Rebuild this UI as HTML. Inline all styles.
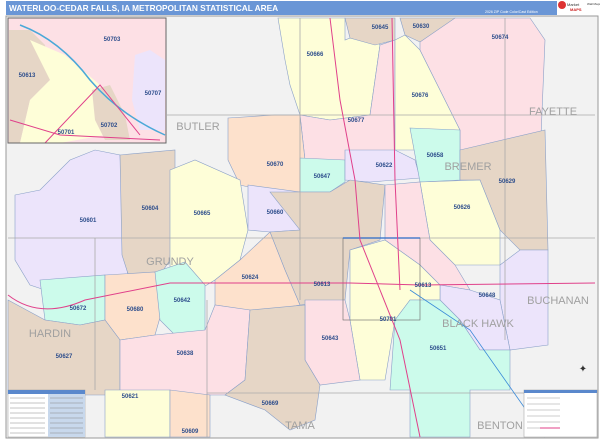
<!DOCTYPE html>
<html><head><meta charset="utf-8"><style>
body{margin:0;width:600px;height:439px;overflow:hidden;background:#fff;font-family:"Liberation Sans",sans-serif}
svg{display:block}
.z{font:bold 6px "Liberation Sans",sans-serif;fill:#2e4e8c}
.c{font:11px "Liberation Sans",sans-serif;fill:#a0a0a0}
</style></head><body>
<svg width="600" height="439" viewBox="0 0 600 439">
<rect x="0" y="0" width="600" height="439" fill="#fff"/>
<rect x="6" y="1" width="551" height="14" fill="#6a96d6"/>
<text x="9" y="11" font-family="Liberation Sans" font-weight="bold" font-size="8.3" fill="#fff">WATERLOO-CEDAR FALLS, IA METROPOLITAN STATISTICAL AREA</text>
<text x="485" y="13" font-family="Liberation Sans" font-size="3.5" fill="#fff">2026 ZIP Code Color/Cast Edition</text>
<rect x="557" y="0" width="43" height="15" fill="#fff"/>
<circle cx="562" cy="5" r="4" fill="#d33"/>
<text x="567" y="6" font-size="4" fill="#333">Market</text>
<text x="570" y="11" font-size="4" font-weight="bold" fill="#c22">MAPS</text>
<text x="587" y="5" font-size="3" fill="#333">Wall Maps</text>
<rect x="6" y="16" width="592" height="422" fill="#f2f2f2" stroke="#999" stroke-width="1"/>
<g stroke="#8aa0c8" stroke-width="0.6">
<polygon points="278,18 345,18 345,40 370,30 380,45 370,115 330,120 300,115 290,85 285,60" fill="#fefed8"/>
<polygon points="345,18 395,18 395,40 375,45 350,38" fill="#e6d6c6"/>
<polygon points="400,18 455,18 450,40 420,42 405,35" fill="#e6d6c6"/>
<polygon points="300,115 330,120 370,115 380,45 395,40 395,150 380,175 330,175 305,160" fill="#fde0e5"/>
<polygon points="395,40 405,35 420,50 440,90 460,130 460,150 395,150" fill="#fefed8"/>
<polygon points="420,42 455,18 530,18 545,40 540,160 460,160 460,130 440,90 420,50" fill="#fde0e5"/>
<polygon points="228,118 275,115 300,115 305,160 300,192 270,192 240,185 228,160" fill="#fde1cc"/>
<polygon points="300,158 345,160 345,182 330,192 300,192" fill="#ccfbeb"/>
<polygon points="345,150 395,150 415,160 420,178 370,182 345,180" fill="#ece4fb"/>
<polygon points="410,128 460,130 460,180 420,182" fill="#ccfbeb"/>
<polygon points="460,150 545,130 548,250 520,250 500,230 480,180 460,180" fill="#e6d6c6"/>
<polygon points="420,182 480,180 500,230 500,265 455,265 430,240" fill="#fefed8"/>
<polygon points="15,195 40,190 70,160 95,150 120,155 125,255 130,290 60,295 30,285 15,260" fill="#ece4fb"/>
<polygon points="120,155 175,150 175,170 170,260 160,275 130,280 122,255" fill="#e6d6c6"/>
<polygon points="170,170 195,160 240,180 248,230 240,260 215,280 190,295 170,275" fill="#fefed8"/>
<polygon points="248,185 300,192 300,230 270,232 248,230" fill="#ece4fb"/>
<polygon points="270,192 330,192 350,180 385,185 380,240 350,250 345,300 300,305 285,270 270,232 300,230" fill="#e6d6c6"/>
<polygon points="385,185 420,182 430,240 455,265 470,290 440,285 420,265 385,240" fill="#fde0e5"/>
<polygon points="240,260 270,232 285,270 300,305 260,312 215,305 215,280" fill="#fde1cc"/>
<polygon points="500,265 520,250 548,250 548,345 510,350 500,300" fill="#ece4fb"/>
<polygon points="440,285 470,290 500,300 510,350 480,350 460,320 440,300" fill="#ece4fb"/>
<polygon points="350,250 385,240 420,265 440,285 440,300 410,300 395,320 385,380 360,380 350,320" fill="#fefed8"/>
<polygon points="395,320 410,300 440,300 460,320 480,350 510,350 510,390 470,390 470,437 410,437 410,390 390,390" fill="#ccfbeb"/>
<polygon points="305,300 345,300 350,320 360,380 320,385 305,360" fill="#fde0e5"/>
<polygon points="40,280 105,275 105,320 80,325 45,320" fill="#ccfbeb"/>
<polygon points="105,275 155,272 165,300 155,335 120,340 105,320" fill="#fde1cc"/>
<polygon points="155,272 185,262 205,285 205,330 175,335 160,320" fill="#ccfbeb"/>
<polygon points="8,300 45,320 80,325 105,320 120,340 120,395 90,395 60,395 8,395" fill="#e6d6c6"/>
<polygon points="120,340 155,335 205,330 215,305 250,310 245,380 225,395 120,395" fill="#fde0e5"/>
<polygon points="250,310 305,305 305,360 320,385 315,420 290,430 265,410 225,395 245,380" fill="#e6d6c6"/>
<polygon points="105,390 170,390 170,437 105,437" fill="#fefed8"/>
<polygon points="170,390 210,395 210,437 170,437" fill="#fde1cc"/>
</g>
<rect x="8" y="18" width="158" height="125" fill="#fde0e5" stroke="#666" stroke-width="1"/>
<polygon points="9,30 30,30 45,45 50,80 30,100 20,143 9,143" fill="#e6d6c6"/>
<polygon points="30,40 65,55 100,85 105,135 60,143 20,143 30,100 50,80" fill="#fefed8"/>
<polygon points="92,90 110,85 125,115 130,140 105,140 95,120" fill="#e6d6c6"/>
<polygon points="135,55 150,50 165,60 165,130 140,130 132,100" fill="#ece4fb"/>
<path d="M20,25 Q60,40 90,80 Q120,115 165,135" stroke="#4aa8d8" stroke-width="1.5" fill="none"/>
<path d="M10,120 L60,135 L160,140 M45,143 L100,85 L140,135" stroke="#e0408a" stroke-width="1" fill="none"/>
<rect x="8" y="18" width="158" height="125" fill="none" stroke="#666" stroke-width="1"/>
<g stroke="#aaa" stroke-width="0.8" fill="none">
<line x1="166" y1="115" x2="595" y2="115"/><line x1="8" y1="238" x2="595" y2="238"/>
<line x1="300" y1="18" x2="300" y2="300"/><line x1="505" y1="18" x2="505" y2="340"/>
<line x1="95" y1="238" x2="95" y2="390"/><line x1="207" y1="300" x2="207" y2="437"/>
<line x1="207" y1="393" x2="597" y2="393"/>
</g>
<rect x="343" y="238" width="77" height="82" fill="none" stroke="#666" stroke-width="0.6"/>
<line x1="343" y1="238" x2="420" y2="238" stroke="#2a6ac8" stroke-width="1.2"/>
<g stroke="#e0408a" stroke-width="1" fill="none">
<path d="M8,295 Q40,320 85,300 L170,283 L350,283 L420,285 L595,283"/>
<path d="M330,18 L340,100 L355,180 L360,240 L380,290 L400,340 L420,437"/>
<path d="M392,18 L395,180 L400,290"/>
</g>
<path d="M410,290 L470,330 L545,437" stroke="#3a8ad8" stroke-width="0.8" fill="none"/>
<g class="c" text-anchor="middle">
<text x="198" y="130">BUTLER</text><text x="553" y="115">FAYETTE</text>
<text x="468" y="170">BREMER</text><text x="170" y="265">GRUNDY</text>
<text x="558" y="304">BUCHANAN</text><text x="50" y="337">HARDIN</text>
<text x="478" y="327">BLACK HAWK</text><text x="300" y="429">TAMA</text><text x="500" y="429">BENTON</text>
</g>
<g class="z" text-anchor="middle">
<text x="112" y="41">50703</text><text x="27" y="77">50613</text><text x="153" y="95">50707</text>
<text x="109" y="127">50702</text><text x="68" y="152" style="display:none">50701</text><text x="66" y="134">50701</text>
<text x="380" y="29">50645</text><text x="421" y="28">50630</text><text x="500" y="39">50674</text>
<text x="315" y="56">50666</text><text x="420" y="97">50676</text><text x="356" y="122">50677</text>
<text x="275" y="166">50670</text><text x="322" y="178">50647</text><text x="384" y="167">50622</text>
<text x="435" y="157">50658</text><text x="507" y="183">50629</text><text x="462" y="209">50626</text>
<text x="150" y="210">50604</text><text x="88" y="222">50601</text><text x="202" y="215">50665</text>
<text x="275" y="214">50660</text><text x="250" y="279">50624</text><text x="322" y="286">50613</text>
<text x="423" y="287">50613</text><text x="487" y="297">50648</text>
<text x="78" y="310">50672</text><text x="135" y="311">50680</text><text x="182" y="302">50642</text>
<text x="388" y="321">50701</text><text x="330" y="340">50643</text><text x="438" y="350">50651</text>
<text x="64" y="358">50627</text><text x="185" y="355">50638</text>
<text x="130" y="398">50621</text><text x="270" y="405">50669</text><text x="190" y="433">50609</text>
</g>
<rect x="8" y="390" width="77" height="47" fill="#fff" stroke="#999" stroke-width="0.5"/>
<rect x="8" y="390" width="77" height="4" fill="#5a88cc"/>
<rect x="48" y="394" width="37" height="43" fill="#c8d8ec"/>
<g stroke="#888" stroke-width="0.5">
<line x1="10" y1="398" x2="45" y2="398"/><line x1="10" y1="403" x2="45" y2="403"/><line x1="10" y1="408" x2="45" y2="408"/><line x1="10" y1="413" x2="45" y2="413"/><line x1="10" y1="418" x2="45" y2="418"/><line x1="10" y1="423" x2="45" y2="423"/><line x1="10" y1="428" x2="45" y2="428"/><line x1="10" y1="433" x2="45" y2="433"/>
<line x1="50" y1="398" x2="83" y2="398"/><line x1="50" y1="403" x2="83" y2="403"/><line x1="50" y1="408" x2="83" y2="408"/><line x1="50" y1="413" x2="83" y2="413"/><line x1="50" y1="418" x2="83" y2="418"/><line x1="50" y1="423" x2="83" y2="423"/><line x1="50" y1="428" x2="83" y2="428"/><line x1="50" y1="433" x2="83" y2="433"/>
</g>
<rect x="524" y="390" width="73" height="47" fill="#fff" stroke="#999" stroke-width="0.5"/>
<rect x="524" y="390" width="73" height="3" fill="#5a88cc"/>
<g stroke="#999" stroke-width="0.5"><line x1="527" y1="398" x2="560" y2="398"/><line x1="527" y1="404" x2="560" y2="404"/><line x1="527" y1="410" x2="560" y2="410"/><line x1="527" y1="416" x2="560" y2="416"/><line x1="527" y1="422" x2="560" y2="422"/><line x1="527" y1="428" x2="560" y2="428"/></g>
<line x1="540" y1="428" x2="560" y2="428" stroke="#e0408a" stroke-width="1"/>
<text x="583" y="372" font-size="10" fill="#333" text-anchor="middle">✦</text>
</svg>
</body></html>
